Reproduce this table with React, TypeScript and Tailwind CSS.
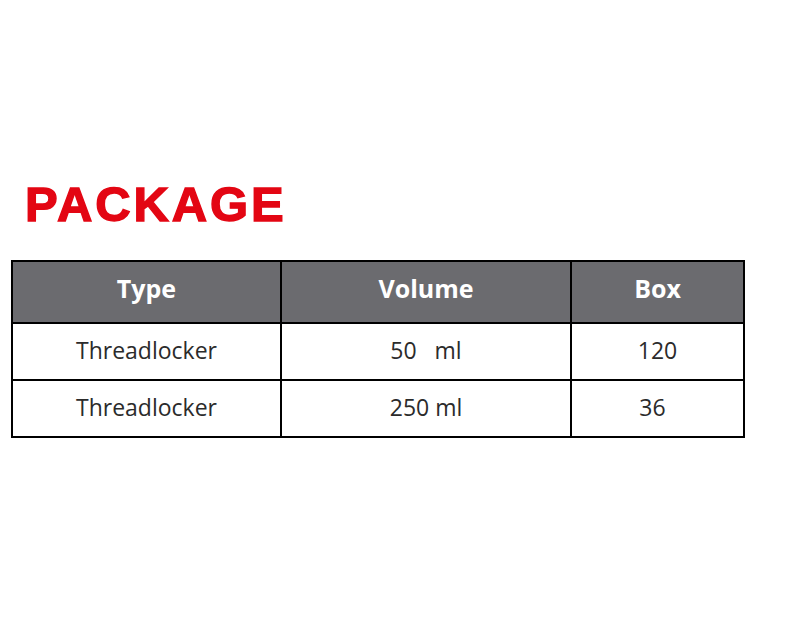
const rows = [
  { type: "Threadlocker", volume: "50   ml", box: "120" },
  { type: "Threadlocker", volume: "250 ml", box: "36" },
]

export default function App() {
  return (
    <div className="w-[800px] h-[640px] bg-white pt-[176px] pl-[11px] font-['Open_Sans',sans-serif]">
      <h1 className="pl-[14px] text-[49px] leading-[56px] font-black text-[#e30613] tracking-[2.9px] [-webkit-text-stroke:1.4px_#e30613] font-['Liberation_Sans',Arial,sans-serif]">
        PACKAGE
      </h1>
      <table className="mt-[28px] border-collapse border-2 border-black w-[734px] table-fixed">
        <thead>
          <tr className="bg-[#6b6b6f] h-[62px]">
            <th className="w-[269px] border-2 border-black text-white text-[25px] font-bold pb-[6px]">Type</th>
            <th className="w-[290px] border-2 border-black text-white text-[25px] font-bold pb-[6px]">Volume</th>
            <th className="border-2 border-black text-white text-[25px] font-bold pb-[6px]">Box</th>
          </tr>
        </thead>
        <tbody>
          {rows.map((row, i) => (
            <tr key={i} className="h-[57px]">
              <td className="border-2 border-black text-center text-[23px] text-[#2b2b2b] pb-[3px]">{row.type}</td>
              <td className="border-2 border-black text-center text-[23px] text-[#2b2b2b] whitespace-pre pb-[3px]">{row.volume}</td>
              <td className={`border-2 border-black text-center text-[23px] text-[#2b2b2b] pb-[3px] ${i === 1 ? "pr-[10px]" : ""}`}>{row.box}</td>
            </tr>
          ))}
        </tbody>
      </table>
    </div>
  )
}
